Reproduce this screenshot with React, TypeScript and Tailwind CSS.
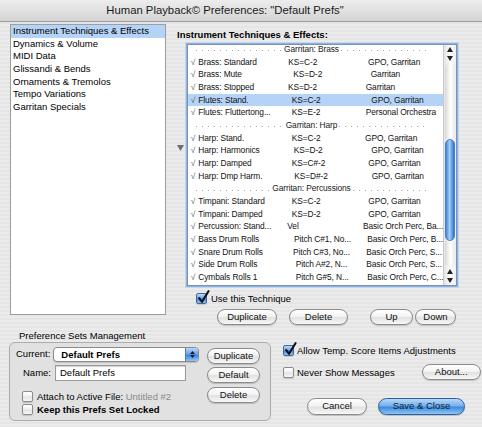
import React from 'react';

type Row =
  | { h: string }
  | { n: string; a: string; b: string; x2: number; x3: number; sel?: boolean };

const ROWS: Row[] = [
  { h: 'Garritan: Brass' },
  { n: 'Brass: Standard', a: 'KS=C-2', b: 'GPO, Garritan', x2: 289.3, x3: 369 },
  { n: 'Brass: Mute', a: 'KS=D-2', b: 'Garritan', x2: 294.3, x3: 371.7 },
  { n: 'Brass: Stopped', a: 'KS=D-2', b: 'Garritan', x2: 289, x3: 366.7 },
  { n: 'Flutes: Stand.', a: 'KS=C-2', b: 'GPO, Garritan', x2: 292.7, x3: 372.3, sel: true },
  { n: 'Flutes: Fluttertong...', a: 'KS=E-2', b: 'Personal Orchestra', x2: 292.7, x3: 366.7 },
  { h: 'Garritan: Harp' },
  { n: 'Harp: Stand.', a: 'KS=C-2', b: 'GPO, Garritan', x2: 292.7, x3: 366 },
  { n: 'Harp: Harmonics', a: 'KS=D-2', b: 'GPO, Garritan', x2: 294.7, x3: 372.3 },
  { n: 'Harp: Damped', a: 'KS=C#-2', b: 'GPO, Garritan', x2: 292.7, x3: 369.3 },
  { n: 'Harp: Dmp Harm.', a: 'KS=D#-2', b: 'GPO, Garritan', x2: 295.3, x3: 372.7 },
  { h: 'Garritan: Percussions' },
  { n: 'Timpani: Standard', a: 'KS=C-2', b: 'GPO, Garritan', x2: 292.7, x3: 369.3 },
  { n: 'Timpani: Damped', a: 'KS=D-2', b: 'GPO, Garritan', x2: 292.7, x3: 369.3 },
  { n: 'Percussion: Stand...', a: 'Vel', b: 'Basic Orch Perc, Ba...', x2: 288.3, x3: 364 },
  { n: 'Bass Drum Rolls', a: 'Pitch C#1, No...', b: 'Basic Orch Perc, B...', x2: 295, x3: 368.3 },
  { n: 'Snare Drum Rolls', a: 'Pitch C#3, No...', b: 'Basic Orch Perc, S...', x2: 294, x3: 367.3 },
  { n: 'Side Drum Rolls', a: 'Pitch A#2, N...', b: 'Basic Orch Perc, S...', x2: 296.7, x3: 367.3 },
  { n: 'Cymbals Rolls 1', a: 'Pitch G#5, N...', b: 'Basic Orch Perc, C...', x2: 296.7, x3: 368.3 },
];

const LEFT_ITEMS = [
  'Instrument Techniques & Effects',
  'Dynamics & Volume',
  'MIDI Data',
  'Glissandi & Bends',
  'Ornaments & Tremolos',
  'Tempo Variations',
  'Garritan Specials',
];

function Btn({ children, className, def }: { children: React.ReactNode; className: string; def?: boolean }) {
  return (
    <div
      className={`flex items-center justify-center rounded-full border shadow-[0_1px_1px_rgba(0,0,0,0.18)] ${
        def
          ? 'border-[#2f5d9e] bg-[linear-gradient(to_bottom,#b7d8f8_0%,#77b1ec_45%,#3f8ae0_55%,#8cc6f6_100%)] text-[#0d1d33]'
          : 'border-[#8b8b8b] bg-[linear-gradient(to_bottom,#ffffff_0%,#f3f3f3_45%,#e1e1e1_55%,#f8f8f8_100%)] text-[#111]'
      } ${className}`}
    >
      {children}
    </div>
  );
}

function Check({ on }: { on?: boolean }) {
  return (
    <span
      className={`relative inline-block h-[11px] w-[11px] shrink-0 rounded-[2px] border shadow-[0_1px_1px_rgba(0,0,0,0.15)] ${
        on
          ? 'border-[#3f68a3] bg-[linear-gradient(to_bottom,#bddaf8_0%,#6aa6e8_48%,#3d84dc_52%,#93c7f5_100%)]'
          : 'border-[#8c8c8c] bg-[linear-gradient(to_bottom,#ffffff_0%,#f0f0f0_48%,#e2e2e2_52%,#f7f7f7_100%)]'
      }`}
    >
      {on && (
        <svg className="absolute left-[0px] top-[-4px]" width="13" height="14" viewBox="0 0 13 14">
          <path d="M2.2 8.2 L5 11.8 L11.5 1.2" stroke="#111" strokeWidth="2.1" fill="none" strokeLinecap="round" strokeLinejoin="round" />
        </svg>
      )}
    </span>
  );
}

function Arrow({ up }: { up?: boolean }) {
  return (
    <div className="flex h-[9px] items-center justify-center">
      <svg width="6" height="5" viewBox="0 0 6 5">
        <path d={up ? 'M0 5 L3 0 L6 5 Z' : 'M0 0 L3 5 L6 0 Z'} fill="#222" />
      </svg>
    </div>
  );
}

function Scrollbar() {
  return (
    <div className="flex w-[13px] shrink-0 flex-col border-l border-[#c9c9c9] bg-[linear-gradient(to_right,#e4e4e4,#fbfbfb_50%,#eeeeee)]">
      <Arrow up />
      <Arrow />
      <div className="flex flex-1 flex-col px-[1px]">
        <div className="h-[76px] rounded-t-full bg-[linear-gradient(to_right,#d9d9d9,#ffffff_55%,#e8e8e8)]" />
        <div className="h-[102px] rounded-full border border-[#4b7ec2] bg-[linear-gradient(to_right,#3f86dc,#a9d0f6_45%,#66a6eb_70%,#2f74cf)]" />
        <div className="flex-1 rounded-b-full bg-[linear-gradient(to_right,#d9d9d9,#ffffff_55%,#e8e8e8)]" />
      </div>
      <Arrow up />
      <Arrow />
    </div>
  );
}

function Dots() {
  return <div className="mt-[3px] h-[1px] flex-1 bg-[repeating-linear-gradient(to_right,#a6a6a6_0px,#a6a6a6_1px,transparent_1px,transparent_6px)]" />;
}

function Table() {
  return (
    <div className="h-[244px] w-[272px] border border-[#8fb1df] shadow-[0_0_0_1px_#c2d7f2]">
      <div className="flex h-full border border-[#7d93b5] bg-white">
        <div className="flex-1 overflow-hidden text-[8.4px] tracking-[-0.1px]">
          <div className="-mt-[2px]">
            {ROWS.map((r, i) =>
              'h' in r ? (
                <div key={i} className="flex h-[12.67px] items-center pl-[8px] pr-[16px] leading-[12.67px] text-[#222]">
                  <Dots />
                  <span className="px-[2px]">{r.h}</span>
                  <Dots />
                </div>
              ) : (
                <div
                  key={i}
                  className={`flex h-[12.67px] items-center whitespace-nowrap leading-[12.67px] text-[#111] ${r.sel ? 'bg-[#b5d3f7]' : ''}`}
                >
                  <span className="w-[10.3px] shrink-0 pl-[2.7px] text-[#555]">√</span>
                  <span className="shrink-0" style={{ width: r.x2 - 199.3 }}>
                    {r.n}
                  </span>
                  <span className="shrink-0" style={{ width: r.x3 - r.x2 }}>
                    {r.a}
                  </span>
                  <span className="shrink-0">{r.b}</span>
                </div>
              )
            )}
          </div>
        </div>
        <Scrollbar />
      </div>
    </div>
  );
}

export default function App() {
  return (
    <div className="relative h-[427px] w-[482px] overflow-hidden bg-[repeating-linear-gradient(to_bottom,#ebebeb_0px,#ebebeb_2px,#e5e5e5_2px,#e5e5e5_4px)] font-['Liberation_Sans',Arial,sans-serif] text-[9.5px] text-black">
      {/* title bar */}
      <div className="flex h-[22px] items-center justify-center border-b border-[#9d9d9d] bg-[linear-gradient(to_bottom,#ededed,#d4d4d4)] pr-[32px] text-[11.3px] text-[#1a1a1a]">
        Human Playback© Preferences: "Default Prefs"
      </div>

      {/* top section */}
      <div className="flex h-[305px] pl-[10px] pt-[2px]">
        <div className="h-[291px] w-[156px] border border-[#9e9e9e] bg-white">
          {LEFT_ITEMS.map((t, i) => (
            <div
              key={t}
              className={`h-[12.67px] pl-[2px] leading-[12.67px] whitespace-nowrap ${i === 0 ? 'bg-[#b5d3f7]' : ''}`}
            >
              {t}
            </div>
          ))}
        </div>

        <div className="ml-[11px] flex flex-col">
          <div className="mt-[5px] font-bold leading-[11px]">Instrument Techniques &amp; Effects:</div>
          <div className="mt-[3px] flex">
            <div className="w-[9px] shrink-0 pt-[102px]">
              <svg width="7" height="6" viewBox="0 0 7 6">
                <path d="M0 0 L7 0 L3.5 6 Z" fill="#6e6e6e" />
              </svg>
            </div>
            <Table />
          </div>
          <div className="mt-[6px] flex items-center pl-[19px]">
            <Check on />
            <span className="ml-[4px] leading-[11px]">Use this Technique</span>
          </div>
          <div className="mt-[5px] flex pl-[40px]">
            <Btn className="h-[16px] w-[60px]">Duplicate</Btn>
            <Btn className="ml-[12px] h-[16px] w-[59px]">Delete</Btn>
            <Btn className="ml-[22px] h-[16px] w-[43px]">Up</Btn>
            <Btn className="ml-[2px] h-[16px] w-[41px]">Down</Btn>
          </div>
        </div>
      </div>

      {/* bottom section */}
      <div className="flex pl-[9px]">
        <div className="flex w-[262px] flex-col">
          <div className="mt-[3px] pl-[10px] leading-[11px]">Preference Sets Management</div>
          <div className="mt-[1px] flex h-[79px] rounded-[6px] border border-[#acacac] bg-[#e1e1e1]">
            <div className="flex w-[197px] flex-col">
              <div className="mt-[4px] flex items-center pl-[6px]">
                <span>Current:</span>
                <div className="ml-[3px] flex h-[15px] w-[146px] overflow-hidden rounded-[4px] border border-[#8a8a8a] bg-white shadow-[0_1px_1px_rgba(0,0,0,0.15)]">
                  <div className="flex-1 pl-[7px] font-bold leading-[13px]">Default Prefs</div>
                  <div className="flex w-[13px] flex-col items-center justify-center gap-[1px] border-l border-[#4b7ec2] bg-[linear-gradient(to_bottom,#b7d8f8_0%,#6aa6e8_45%,#3d84dc_55%,#8cc6f6_100%)]">
                    <svg width="5" height="3" viewBox="0 0 5 3">
                      <path d="M0 3 L2.5 0 L5 3 Z" fill="#0c1a33" />
                    </svg>
                    <svg width="5" height="3" viewBox="0 0 5 3">
                      <path d="M0 0 L2.5 3 L5 0 Z" fill="#0c1a33" />
                    </svg>
                  </div>
                </div>
              </div>
              <div className="mt-[3px] flex items-center pl-[13px]">
                <span>Name:</span>
                <div className="ml-[4px] h-[16px] w-[131px] border border-[#9a9a9a] bg-white pl-[4px] leading-[14px] shadow-[inset_0_1px_1px_rgba(0,0,0,0.2)]">
                  Default Prefs
                </div>
              </div>
              <div className="mt-[10px] flex items-center pl-[12px]">
                <Check />
                <span className="ml-[4px] leading-[11px]">
                  Attach to Active File: <span className="text-[#8a8a8a]">Untitled #2</span>
                </span>
              </div>
              <div className="mt-[2px] flex items-center pl-[12px]">
                <Check />
                <span className="ml-[4px] font-bold leading-[11px]">Keep this Prefs Set Locked</span>
              </div>
            </div>
            <div className="flex flex-col pt-[5px]">
              <Btn className="h-[16px] w-[53px]">Duplicate</Btn>
              <Btn className="mt-[3px] h-[16px] w-[53px]">Default</Btn>
              <Btn className="mt-[4px] h-[16px] w-[53px]">Delete</Btn>
            </div>
          </div>
        </div>

        <div className="flex flex-1 flex-col pl-[12px]">
          <div className="mt-[18px] flex items-center">
            <Check on />
            <span className="ml-[3px] leading-[11px]">Allow Temp. Score Items Adjustments</span>
          </div>
          <div className="mt-[8px] flex items-center">
            <Check />
            <span className="ml-[3px] leading-[11px]">Never Show Messages</span>
            <Btn className="ml-[27px] h-[16px] w-[59px]">About...</Btn>
          </div>
          <div className="mt-[18px] flex pl-[24px]">
            <Btn className="h-[17px] w-[60px]">Cancel</Btn>
            <Btn def className="ml-[11px] h-[17px] w-[87px]">Save &amp; Close</Btn>
          </div>
        </div>
      </div>
    </div>
  );
}
